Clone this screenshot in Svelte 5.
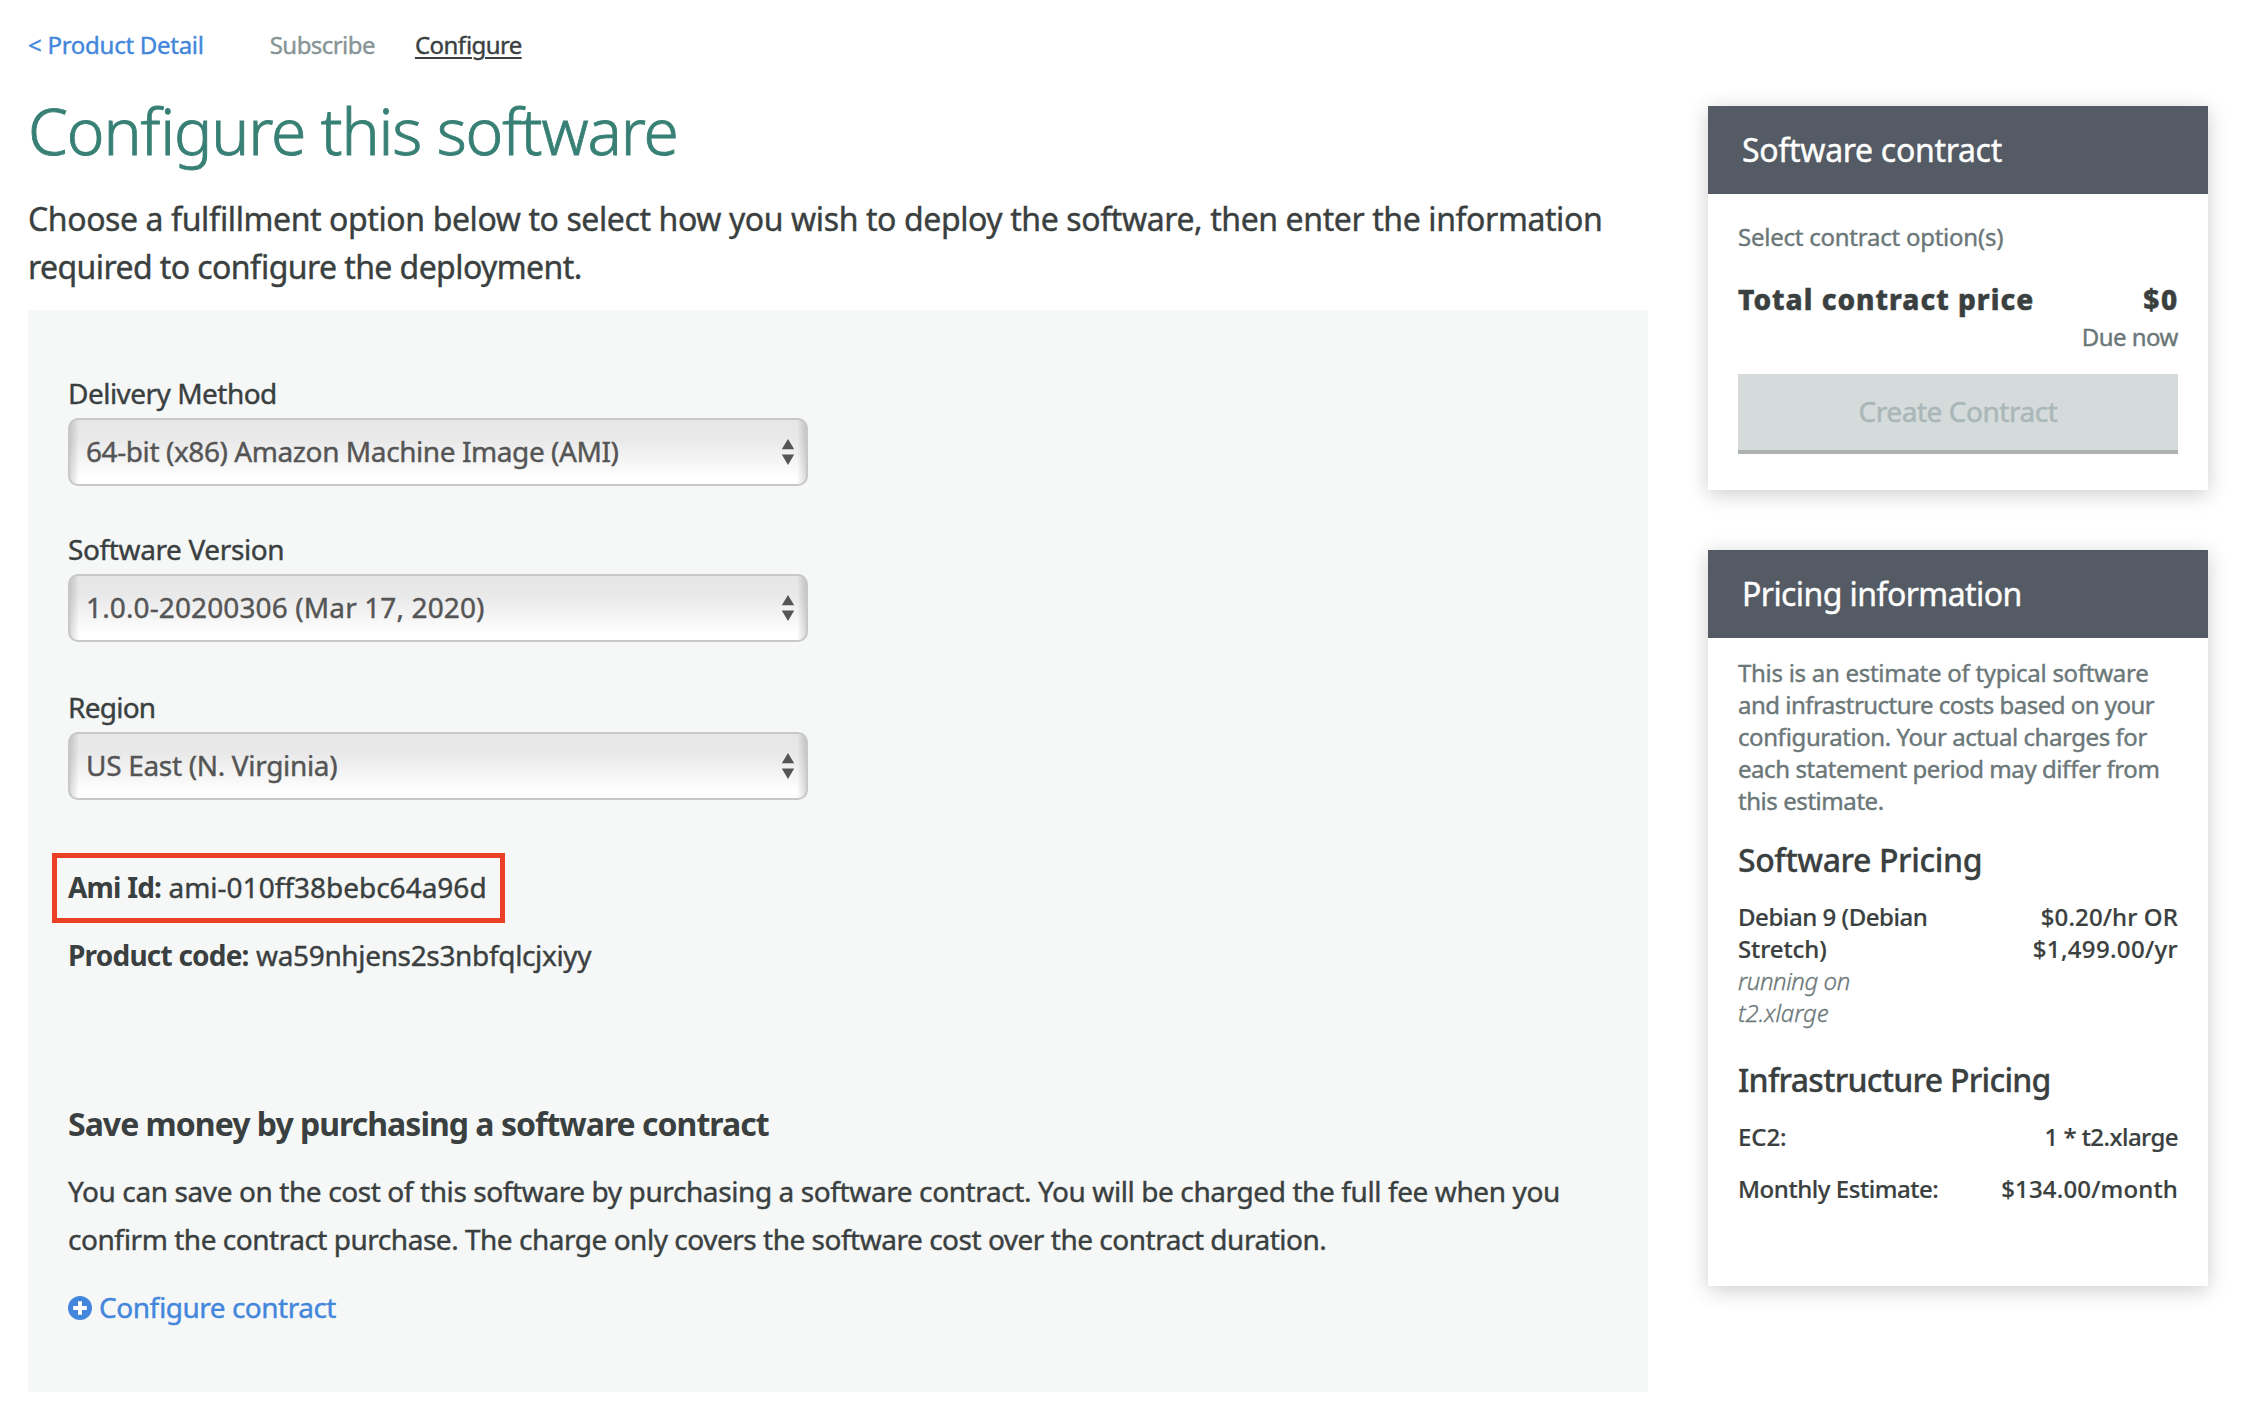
<script>
  const fields = [
    { id: 'delivery', label: 'Delivery Method', value: '64-bit (x86) Amazon Machine Image (AMI)' },
    { id: 'version', label: 'Software Version', value: '1.0.0-20200306 (Mar 17, 2020)' },
    { id: 'region', label: 'Region', value: 'US East (N. Virginia)' }
  ];
</script>

<div class="page">
  <main>
    <nav>
      <a class="back" href="#product">&lt; Product Detail</a>
      <span class="step">Subscribe</span>
      <span class="current">Configure</span>
    </nav>
    <h1>Configure this software</h1>
    <p class="intro">
      Choose a fulfillment option below to select how you wish to deploy the software, then enter the information<br />
      <span class="second">required to configure the deployment.</span>
    </p>
    <section class="panel">
      {#each fields as field (field.id)}
        <div class="field {field.id}">
          <div class="label">{field.label}</div>
          <div class="select" role="combobox" aria-expanded="false" aria-controls="none" tabindex="0">
            <span>{field.value}</span>
            <svg width="14" height="28" viewBox="0 0 14 28"><path d="M7 1 13.2 11.3H.8Z M.8 16.6H13.2L7 27Z" fill="#555" /></svg>
          </div>
        </div>
      {/each}
      <div class="ami"><b>Ami Id:</b> <span>ami-010ff38bebc64a96d</span></div>
      <div class="code"><b>Product code:</b> <span>wa59nhjens2s3nbfqlcjxiyy</span></div>
      <h2>Save money by purchasing a software contract</h2>
      <p class="save">
        You can save on the cost of this software by purchasing a software contract. You will be charged the full fee when you<br />
        <span class="second">confirm the contract purchase. The charge only covers the software cost over the contract duration.</span>
      </p>
      <a class="configure" href="#contract">
        <svg width="24" height="24" viewBox="0 0 24 24"><circle cx="12" cy="12" r="12" fill="#4287dc" /><path d="M12 5.2v13.6M5.2 12h13.6" stroke="#fff" stroke-width="4" stroke-linecap="butt" /></svg>
        <span>Configure contract</span>
      </a>
    </section>
  </main>
  <aside>
    <section class="card contract">
      <header>Software contract</header>
      <div class="body">
        <div class="hint">Select contract option(s)</div>
        <div class="row total"><span>Total contract price</span><span class="sum">$0</span></div>
        <div class="due">Due now</div>
        <button disabled>Create Contract</button>
      </div>
    </section>
    <section class="card pricing">
      <header>Pricing information</header>
      <div class="body">
        <p class="estimate">
          <span class="first">This is an estimate of typical software</span><br />
          <span class="second">and infrastructure costs based on your</span><br />
          configuration. Your actual charges for<br />
          each statement period may differ from<br />
          this estimate.
        </p>
        <h3>Software Pricing</h3>
        <div class="row">
          <div>Debian 9 (Debian<br /><span class="wide">Stretch)</span><br /><i>running on</i><br /><i class="wide">t2.xlarge</i></div>
          <div class="price"><span class="hourly">$0.20/hr OR</span><br />$1,499.00/yr</div>
        </div>
        <h3 class="infra">Infrastructure Pricing</h3>
        <div class="row"><span class="wide">EC2:</span><span class="size">1 * t2.xlarge</span></div>
        <div class="row month"><span>Monthly Estimate:</span><span class="amount">$134.00/month</span></div>
      </div>
    </section>
  </aside>
</div>

<style>
  :global(body) { background: #fff; }
  .page {
    display: flex;
    gap: 60px;
    box-sizing: border-box;
    width: 2252px;
    height: 1422px;
    padding-left: 28px;
    overflow: hidden;
    font-family: "Noto Sans", "Open Sans", sans-serif;
    color: #3a4040;
    white-space: nowrap;
    font-feature-settings: "liga";
    -webkit-text-stroke: 0.4px currentColor;
  }
  main { width: 1620px; }
  a { color: #4287dc; text-decoration: none; }
  nav { display: flex; padding-top: 29px; font-size: 24px; line-height: 32px; letter-spacing: -0.6px; }
  .back { letter-spacing: -0.27px; }
  .step { color: #879596; margin-left: 66px; letter-spacing: -0.55px; }
  .current { margin-left: 40px; text-decoration: underline; text-underline-offset: 3px; text-decoration-thickness: 2px; }
  h1 { margin: 30px 0 24px; font-size: 64px; line-height: 80px; font-weight: 300; letter-spacing: -1.12px; color: #388075; -webkit-text-stroke-width: 0.9px; }
  p { margin: 0; }
  .intro { font-size: 32px; line-height: 48px; letter-spacing: -0.4px; }
  .intro .second { letter-spacing: -0.58px; }
  .panel { box-sizing: border-box; height: 1082px; margin-top: 19px; padding: 65px 40px 0; background: #f6f8f8; font-size: 28px; }
  .field { margin-bottom: 45px; }
  .field.region { margin-top: 47px; margin-bottom: 53px; }
  .label { line-height: 36px; margin-bottom: 7px; letter-spacing: -0.52px; }
  .version .label { letter-spacing: -0.38px; }
  .region .label { letter-spacing: -0.75px; }
  .select {
    display: flex;
    justify-content: space-between;
    align-items: center;
    box-sizing: border-box;
    width: 740px;
    height: 68px;
    padding: 0 11px 0 16px;
    border: 2px solid #c8c8c8;
    border-radius: 10px;
    color: #555;
    letter-spacing: -0.42px;
    background:
      linear-gradient(90deg, rgba(0, 0, 0, 0.15), transparent 9px calc(100% - 9px), rgba(0, 0, 0, 0.15)),
      linear-gradient(#e6e6e6, #e9e9e9 30%, #f4f4f4 62%, #fff 90%);
  }
  .select span { padding-bottom: 2px; }
  .version .select { letter-spacing: 0.12px; }
  .region .select { letter-spacing: -0.32px; }
  .ami { box-sizing: border-box; width: 453px; height: 70px; margin-left: -16px; padding: 5px 11px; border: 5px solid #eb3f26; line-height: 48px; }
  .ami b { letter-spacing: -0.8px; }
  .code { margin-top: 8px; line-height: 48px; }
  .code b { letter-spacing: -0.78px; }
  .code span { letter-spacing: -0.34px; }
  b, h2 { -webkit-text-stroke-width: 0; }
  h2 { margin: 121px 0 19px; font-size: 32px; line-height: 48px; letter-spacing: -0.98px; }
  .save { line-height: 48px; letter-spacing: -0.4px; }
  .save .second { letter-spacing: -0.48px; }
  .configure { display: flex; align-items: center; gap: 7px; margin-top: 20px; line-height: 48px; letter-spacing: -0.5px; }
  .configure svg { margin-top: 2px; }
  aside { width: 500px; padding-top: 106px; }
  .card { box-sizing: border-box; background: #fff; box-shadow: 0 4px 20px rgba(0, 0, 0, 0.2); }
  .contract { height: 384px; margin-bottom: 60px; }
  .pricing { height: 736px; }
  header { height: 88px; box-sizing: border-box; padding: 20px 34px; background: #545b64; color: #fff; font-size: 32px; line-height: 48px; letter-spacing: -0.3px; }
  .pricing header { letter-spacing: -0.58px; }
  .body { padding: 27px 30px 0; font-size: 24px; line-height: 32px; }
  .hint, .due, .estimate { color: #6b7778; }
  .hint { letter-spacing: -0.24px; }
  .estimate { letter-spacing: -0.44px; }
  .estimate .first { letter-spacing: -0.28px; }
  .estimate .second { letter-spacing: -0.52px; }
  .row { display: flex; justify-content: space-between; font-weight: 500; letter-spacing: -0.45px; -webkit-text-stroke-width: 0.2px; }
  .wide { letter-spacing: -0.1px; }
  .price { text-align: right; letter-spacing: 0.33px; }
  .hourly { letter-spacing: 0.1px; }
  .size { letter-spacing: -0.55px; }
  .amount { letter-spacing: 0.15px; }
  .total { margin: 28px 0 4px; font-size: 28px; line-height: 36px; font-weight: 800; letter-spacing: 1.02px; -webkit-text-stroke-width: 0.5px; }
  .sum { letter-spacing: 1.8px; margin-right: -1px; }
  .due { text-align: right; letter-spacing: -0.5px; }
  button {
    display: block;
    width: 440px;
    height: 80px;
    margin-top: 21px;
    padding: 0 0 2px;
    border: 0;
    border-bottom: 4px solid #adb0b0;
    background: #d5dbdb;
    color: #aab7b8;
    font: inherit;
    font-size: 28px;
    letter-spacing: -0.45px;
    -webkit-text-stroke: 0.5px #aab7b8;
  }
  .pricing .body { padding-top: 19px; }
  h3 { margin: 23px 0 21px; font-size: 32px; line-height: 40px; font-weight: 500; letter-spacing: -0.4px; -webkit-text-stroke-width: 0.3px; }
  .infra { margin-top: 31px; letter-spacing: -0.74px; }
  .month { margin-top: 20px; }
  i { font-weight: 300; color: #6b7778; -webkit-text-stroke-width: 0.3px; }
</style>
